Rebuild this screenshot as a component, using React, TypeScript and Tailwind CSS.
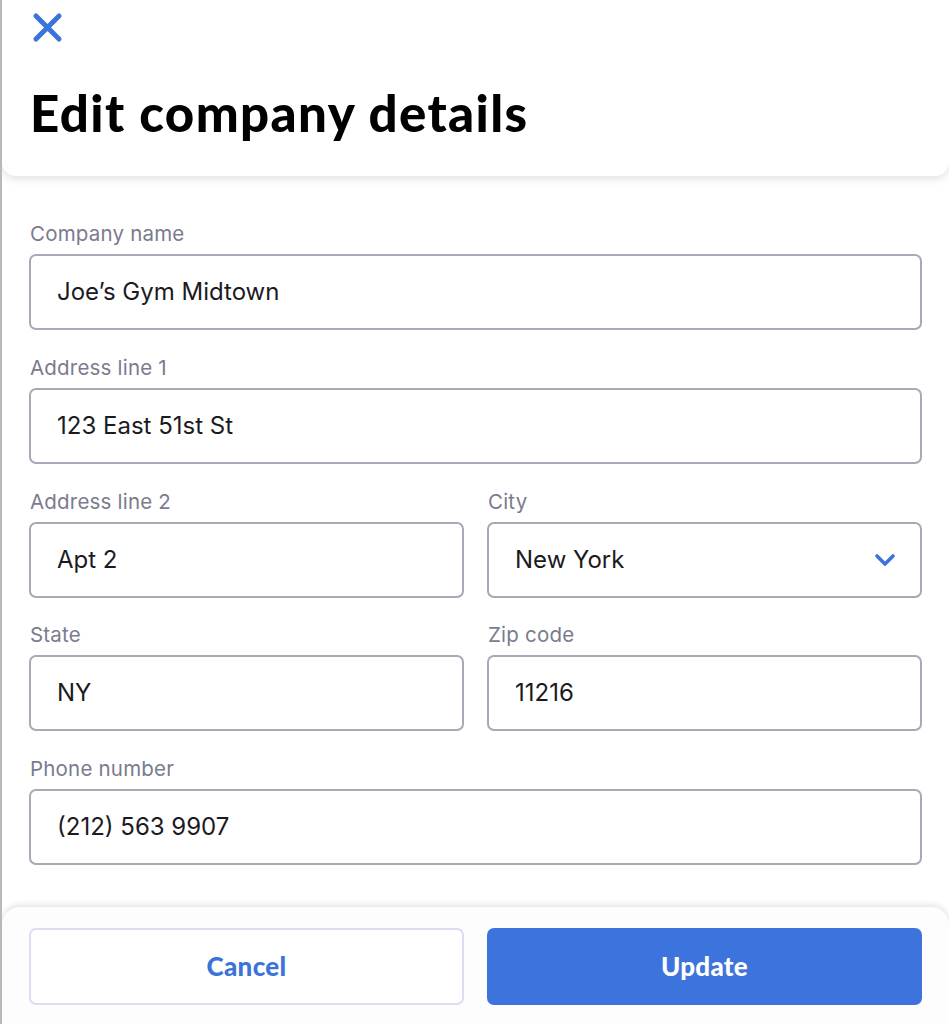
import React from "react";

const Label = ({ children }: { children: React.ReactNode }) => (
  <div className="text-[20.5px] leading-[24px] text-[#7b7b8e] mb-[8px] pl-[1px] tracking-[0.2px]">{children}</div>
);

const Box = ({ value, chevron }: { value: string; chevron?: boolean }) => (
  <div className="h-[76px] rounded-[7px] border-2 border-[#a8a8b6] flex items-center pl-[26px] pr-[24px] bg-white">
    <span className="flex-1 text-[24px] text-[#1b1b1f]">{value}</span>
    {chevron && (
      <svg width="22" height="14" viewBox="0 0 22 14" fill="none">
        <path d="M3 3l8 8 8-8" stroke="#3b73db" strokeWidth="3.6" strokeLinecap="round" strokeLinejoin="round" />
      </svg>
    )}
  </div>
);

const Field = ({ label, value, chevron }: { label: string; value: string; chevron?: boolean }) => (
  <div className="flex flex-col">
    <Label>{label}</Label>
    <Box value={value} chevron={chevron} />
  </div>
);

export default function App() {
  return (
    <div
      className="w-[949px] h-[1024px] bg-white relative overflow-hidden flex flex-col border-l-2 border-[#b9b9b9]"
      style={{ fontFamily: "Inter, 'Noto Sans', sans-serif" }}
    >
      <div className="h-[176px] bg-white rounded-b-[14px] shadow-[0_3px_8px_rgba(0,0,0,0.12)] flex flex-col px-[28px] pt-[12px] relative z-10">
        <svg width="31" height="31" viewBox="0 0 31 31" className="ml-[2px]">
          <path d="M4 4l23 23M27 4L4 27" stroke="#3b73db" strokeWidth="5" strokeLinecap="round" />
        </svg>
        <h1
          className="mt-[42px] text-[51px] leading-[56px] font-black text-black tracking-[1.4px]"
          style={{ fontFamily: "Lato, 'Noto Sans', sans-serif" }}
        >
          Edit company details
        </h1>
      </div>

      <div className="flex-1 flex flex-col px-[27px] pt-[46px] gap-[25.75px]">
        <Field label="Company name" value="Joe’s Gym Midtown" />
        <Field label="Address line 1" value="123 East 51st St" />
        <div className="grid grid-cols-2 gap-x-[23px]">
          <Field label="Address line 2" value="Apt 2" />
          <Field label="City" value="New York" chevron />
        </div>
        <div className="grid grid-cols-2 gap-x-[23px]">
          <Field label="State" value="NY" />
          <Field label="Zip code" value="11216" />
        </div>
        <Field label="Phone number" value="(212) 563 9907" />
      </div>

      <div className="h-[117px] bg-[#fdfdfd] rounded-t-[18px] shadow-[0_-2px_6px_rgba(0,0,0,0.12)] px-[27px] pt-[21px] grid grid-cols-2 gap-x-[23px] relative z-10">
        <button className="h-[77px] rounded-[7px] border-2 border-[#dcdcf2] bg-white text-[#3b73db] text-[26px] font-black tracking-[0.3px]" style={{ fontFamily: "Lato, 'Noto Sans', sans-serif" }}>
          Cancel
        </button>
        <button className="h-[77px] rounded-[7px] bg-[#3c73dc] text-white text-[26px] font-black tracking-[0.3px]" style={{ fontFamily: "Lato, 'Noto Sans', sans-serif" }}>
          Update
        </button>
      </div>
    </div>
  );
}
